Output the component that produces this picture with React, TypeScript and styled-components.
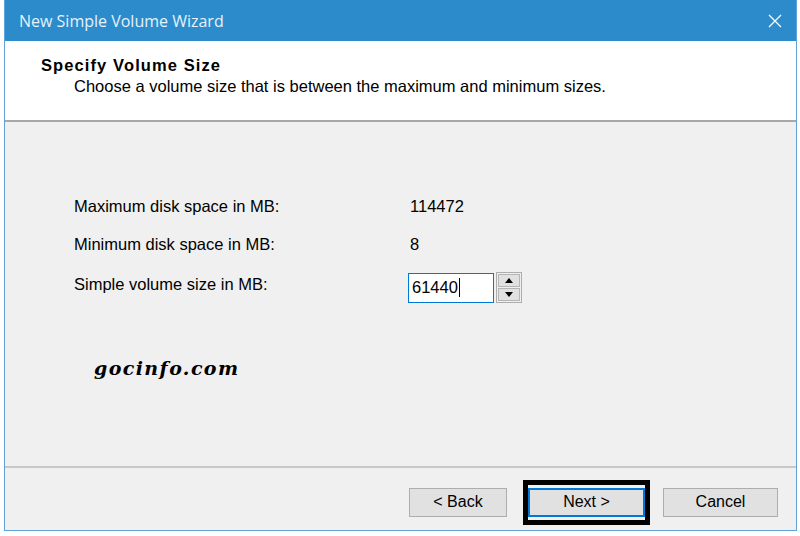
import React from "react";
import styled, { createGlobalStyle } from "styled-components";

const Global = createGlobalStyle`
  html, body { margin: 0; padding: 0; background: #ffffff; }
  body { width: 800px; height: 536px; overflow: hidden; font-family: "Liberation Sans", Arial, sans-serif; }
`;

const Page = styled.div`
  width: 800px;
  height: 536px;
  padding-left: 4px;
  box-sizing: border-box;
`;

const Window = styled.div`
  width: 793px;
  height: 531px;
  box-sizing: border-box;
  border: 1px solid #5fa3d8;
  border-top: none;
  display: flex;
  flex-direction: column;
  background: #f0f0f0;
`;

const TitleBar = styled.div`
  height: 41px;
  background: #2b8bcb;
  display: flex;
  align-items: center;
  justify-content: space-between;
  padding: 0 14px 0 14px;
  flex-shrink: 0;
`;

const Title = styled.span`
  color: #e6f1fa;
  font-size: 16px;
  font-family: "Open Sans", "Liberation Sans", sans-serif;
`;

const Header = styled.div`
  height: 81px;
  background: #ffffff;
  border-bottom: 2px solid #a8a8a8;
  padding: 15px 0 0 36px;
  box-sizing: border-box;
  flex-shrink: 0;
`;

const Heading = styled.div`
  font-weight: bold;
  font-size: 16.5px;
  letter-spacing: 1.1px;
  color: #000;
`;

const SubHeading = styled.div`
  font-size: 16.5px;
  color: #000;
  margin: 2px 0 0 33px;
`;

const Body = styled.div`
  flex: 1;
  padding: 65px 0 0 69px;
  position: relative;
`;

const FieldGrid = styled.div`
  display: grid;
  grid-template-columns: 335px auto;
  grid-auto-rows: 38.5px;
  align-items: center;
  font-size: 16.5px;
  color: #000;
`;

const Label = styled.div<{ $top?: boolean }>`
  align-self: ${(p) => (p.$top ? "start" : "center")};
  padding-top: ${(p) => (p.$top ? "11px" : "0")};
`;

const Value = styled.div`
  padding-left: 1px;
`;

const SpinWrap = styled.div`
  display: flex;
  align-items: center;
  gap: 2px;
  margin-left: -1px;
  margin-top: 9px;
`;

const NumInput = styled.div`
  width: 86px;
  height: 30px;
  box-sizing: border-box;
  border: 1px solid #0078d7;
  background: #fff;
  display: flex;
  align-items: center;
  padding-left: 3px;
  font-size: 16.5px;
`;

const Caret = styled.span`
  display: inline-block;
  width: 1px;
  height: 19px;
  background: #000;
  margin-left: 1px;
`;

const SpinCol = styled.div`
  display: flex;
  flex-direction: column;
  gap: 1px;
  border: 1px solid #adadad;
  padding: 1px;
  background: #f0f0f0;
`;

const SpinBtn = styled.div`
  width: 20px;
  height: 11px;
  background: #e1e1e1;
  border: 1px solid #b5b5b5;
  display: flex;
  align-items: center;
  justify-content: center;
`;

const Watermark = styled.div`
  position: absolute;
  left: 89px;
  top: 235px;
  font-family: "DejaVu Serif", serif;
  font-weight: bold;
  font-style: italic;
  font-size: 19px;
  letter-spacing: 1.4px;
  color: #000;
`;

const Footer = styled.div`
  height: 64px;
  border-top: 2px solid #c8c8c8;
  box-sizing: border-box;
  display: flex;
  align-items: center;
  padding: 6px 0 0 404px;
  flex-shrink: 0;
`;

const Button = styled.div<{ $w: number; $focus?: boolean }>`
  width: ${(p) => p.$w}px;
  height: 29px;
  box-sizing: border-box;
  background: #e1e1e1;
  border: 1px solid #adadad;
  border-color: ${(p) => (p.$focus ? "#0078d7" : "#adadad")};
  border-width: ${(p) => (p.$focus ? "2px" : "1px")};
  display: flex;
  align-items: center;
  justify-content: center;
  font-size: 16px;
  color: #000;
`;

const Highlight = styled.div`
  border: 5px solid #000;
  padding: 3px 0 3px;
  margin: 0 13px 0 16px;
  width: 127px;
  box-sizing: border-box;
`;

const Arrow = ({ up }: { up?: boolean }) => (
  <svg width="8" height="5" viewBox="0 0 8 5">
    <polygon points={up ? "0,5 8,5 4,0" : "0,0 8,0 4,5"} fill="#000" />
  </svg>
);

export default function App() {
  return (
    <>
      <Global />
      <Page>
        <Window>
          <TitleBar>
            <Title>New Simple Volume Wizard</Title>
            <svg width="14" height="14" viewBox="0 0 14 14">
              <path d="M1 1L13 13M13 1L1 13" stroke="#fff" strokeWidth="1.3" />
            </svg>
          </TitleBar>
          <Header>
            <Heading>Specify Volume Size</Heading>
            <SubHeading>Choose a volume size that is between the maximum and minimum sizes.</SubHeading>
          </Header>
          <Body>
            <FieldGrid>
              <Label>Maximum disk space in MB:</Label>
              <Value>114472</Value>
              <Label>Minimum disk space in MB:</Label>
              <Value>8</Value>
              <Label $top>Simple volume size in MB:</Label>
              <SpinWrap>
                <NumInput>
                  61440
                  <Caret />
                </NumInput>
                <SpinCol>
                  <SpinBtn><Arrow up /></SpinBtn>
                  <SpinBtn><Arrow /></SpinBtn>
                </SpinCol>
              </SpinWrap>
            </FieldGrid>
            <Watermark>gocinfo.com</Watermark>
          </Body>
          <Footer>
            <Button $w={98}>&lt; Back</Button>
            <Highlight>
              <Button $w={117} $focus>Next &gt;</Button>
            </Highlight>
            <Button $w={115}>Cancel</Button>
          </Footer>
        </Window>
      </Page>
    </>
  );
}
